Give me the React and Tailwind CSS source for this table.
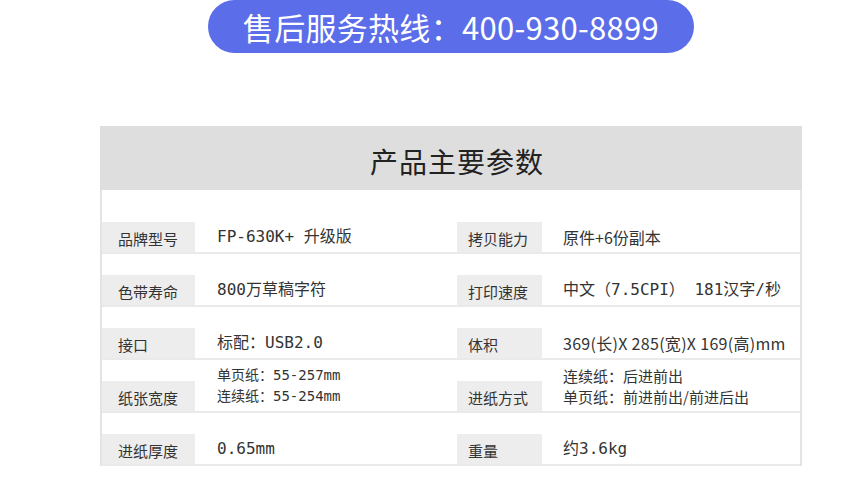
import React from 'react';

const cjk = { fontFamily: '"Noto Sans CJK SC", "Noto Sans", sans-serif' };
const mono = { fontFamily: '"DejaVu Sans Mono", "Noto Sans CJK SC", monospace' };

const rows = [
  {
    left: { label: '品牌型号', value: ['FP-630K+ 升级版'] },
    right: { label: '拷贝能力', value: ['原件+6份副本'], font: 'cjk' },
  },
  {
    left: { label: '色带寿命', value: ['800万草稿字符'] },
    right: { label: '打印速度', value: ['中文（7.5CPI） 181汉字/秒'] },
  },
  {
    left: { label: '接口', value: ['标配：USB2.0'] },
    right: { label: '体积', value: ['369(长)X 285(宽)X 169(高)mm'], font: 'cjk', small: true },
  },
  {
    left: { label: '纸张宽度', value: ['单页纸：55-257mm', '连续纸：55-254mm'], small: true },
    right: { label: '进纸方式', value: ['连续纸：后进前出', '单页纸：前进前出/前进后出'], font: 'cjk' },
  },
  {
    left: { label: '进纸厚度', value: ['0.65mm'] },
    right: { label: '重量', value: ['约3.6kg'] },
  },
];

function Value({ cell }) {
  const style = cell.font === 'cjk' ? cjk : mono;
  if (cell.value.length > 1) {
    return (
      <div
        className={`flex flex-col pb-[4px] text-[#333] ${cell.small ? 'text-[14px]' : 'text-[15px]'} leading-[21px]`}
        style={style}
      >
        {cell.value.map((line) => (
          <span key={line}>{line}</span>
        ))}
      </div>
    );
  }
  return (
    <div
      className={`h-[30px] leading-[30px] text-[#333] ${cell.small ? 'text-[16px] tracking-[0.3px]' : 'text-[16px]'}`}
      style={style}
    >
      {cell.value[0]}
    </div>
  );
}

export default function App() {
  return (
    <div className="w-[847px] h-[502px] bg-white overflow-hidden" style={cjk}>
      {/* hotline pill */}
      <div className="ml-[208px] w-[486px] h-[53px] rounded-full bg-[#5b6de8] flex items-center justify-center">
        <span className="text-white text-[31px] leading-none tracking-[0.3px]">售后服务热线：400-930-8899</span>
      </div>

      {/* spec table */}
      <div className="ml-[100px] mt-[73px] w-[702px]">
        <div className="h-[64px] bg-[#dedede] flex items-center justify-center pt-[6px] pl-[12px]">
          <h1 className="text-[28px] text-[#222] font-normal leading-none tracking-[1px]">产品主要参数</h1>
        </div>
        <div className="border-x-2 border-[#e4e4e4] pt-[11px]">
          {rows.map((row) => (
            <div key={row.left.label} className="h-[53px] flex items-end border-b-2 border-[#eaeaea]">
              <div className="w-[355px] flex items-end">
                <div className="w-[93px] h-[30px] bg-[#ededed] pl-[16px] text-[15px] leading-[33px] text-[#333]">
                  {row.left.label}
                </div>
                <div className="pl-[22px]">
                  <Value cell={row.left} />
                </div>
              </div>
              <div className="flex items-end">
                <div className="w-[85px] h-[30px] bg-[#ededed] pl-[11px] text-[15px] leading-[33px] text-[#333]">
                  {row.right.label}
                </div>
                <div className="pl-[21px]">
                  <Value cell={row.right} />
                </div>
              </div>
            </div>
          ))}
        </div>
      </div>
    </div>
  );
}
